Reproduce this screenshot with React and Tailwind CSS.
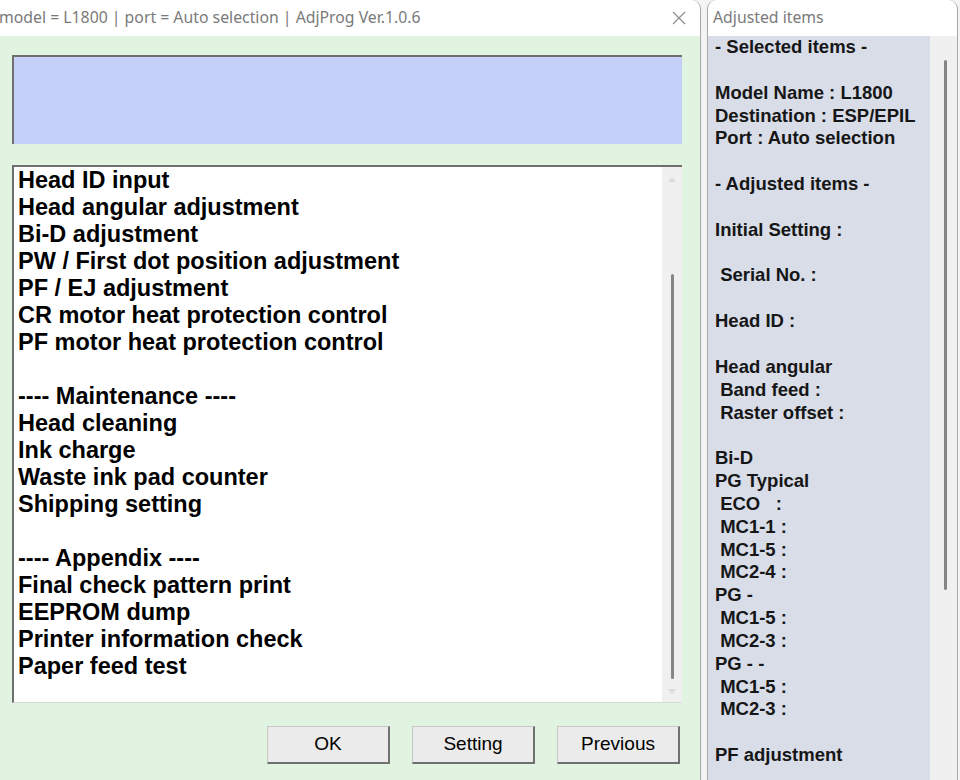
import React from 'react';

const menuItems = [
  'Head ID input',
  'Head angular adjustment',
  'Bi-D adjustment',
  'PW / First dot position adjustment',
  'PF / EJ adjustment',
  'CR motor heat protection control',
  'PF motor heat protection control',
  '',
  '---- Maintenance ----',
  'Head cleaning',
  'Ink charge',
  'Waste ink pad counter',
  'Shipping setting',
  '',
  '---- Appendix ----',
  'Final check pattern print',
  'EEPROM dump',
  'Printer information check',
  'Paper feed test',
];

const adjustedLines = [
  '- Selected items -',
  '',
  'Model Name : L1800',
  'Destination : ESP/EPIL',
  'Port : Auto selection',
  '',
  '- Adjusted items -',
  '',
  'Initial Setting :',
  '',
  ' Serial No. :',
  '',
  'Head ID :',
  '',
  'Head angular',
  ' Band feed :',
  ' Raster offset :',
  '',
  'Bi-D',
  'PG Typical',
  ' ECO   :',
  ' MC1-1 :',
  ' MC1-5 :',
  ' MC2-4 :',
  'PG -',
  ' MC1-5 :',
  ' MC2-3 :',
  'PG - -',
  ' MC1-5 :',
  ' MC2-3 :',
  '',
  'PF adjustment',
];

function WinButton({ children }) {
  return (
    <button className="w-[123px] h-[38px] bg-[#ebebeb] border-t border-l border-[#c8c8c8] border-r-2 border-b-2 border-r-[#707070] border-b-[#707070] text-[19px] text-black font-[family-name:Liberation_Sans,Arial,sans-serif] flex items-center justify-center">
      {children}
    </button>
  );
}

export default function App() {
  return (
    <div className="w-[960px] h-[780px] flex bg-[#f4f4f4] overflow-hidden font-[family-name:Liberation_Sans,Arial,sans-serif]">
      {/* main window */}
      <div className="w-[701px] h-full flex flex-col bg-white border-r border-[#a8a8a8] rounded-tr-[9px] overflow-hidden">
        <div className="h-[36px] shrink-0 flex items-center justify-between pr-[13px]">
          <span className="text-[15.8px] text-[#7a7a7a] font-[family-name:Noto_Sans,sans-serif] -ml-[1px] whitespace-nowrap">
            model = L1800 | port = Auto selection | AdjProg Ver.1.0.6
          </span>
          <svg width="16" height="16" viewBox="0 0 16 16" className="text-[#8a8a8a]">
            <path d="M2 2 L14 14 M14 2 L2 14" stroke="currentColor" strokeWidth="1.1" fill="none" />
          </svg>
        </div>
        <div className="flex-1 bg-[#e1f3e1] pl-[12px] pr-[18px] pt-[19px] flex flex-col">
          <div className="h-[89px] bg-[#c4d0f8] border-t-2 border-l-2 border-[#6f6f6f]" />
          <div className="mt-[21px] h-[538px] bg-white border-t-2 border-l-2 border-[#6f6f6f] border-b border-b-[#d8d8d8] flex">
            <div className="flex-1 pl-[4px]">
              {menuItems.map((item, i) => (
                <div key={i} className="h-[27px] leading-[27px] text-[23.5px] font-bold text-black whitespace-pre">
                  {item}
                </div>
              ))}
            </div>
            <div className="w-[20px] bg-[#f0f0f0] flex flex-col items-center pt-[10px] pb-[8px]">
              <svg width="8" height="5" viewBox="0 0 8 5"><path d="M0 5 L4 0 L8 5 Z" fill="#dcdcdc" /></svg>
              <div className="mt-[92px] w-[3px] h-[405px] bg-[#858585] rounded-full" />
              <div className="flex-1" />
              <svg width="8" height="5" viewBox="0 0 8 5"><path d="M0 0 L4 5 L8 0 Z" fill="#dcdcdc" /></svg>
            </div>
          </div>
          <div className="mt-[23px] flex justify-end gap-[22px] mr-[2px]">
            <WinButton>OK</WinButton>
            <WinButton>Setting</WinButton>
            <WinButton>Previous</WinButton>
          </div>
        </div>
      </div>

      <div className="w-[6px] shrink-0" />

      {/* adjusted items window */}
      <div className="w-[251px] h-full flex flex-col bg-white border-l border-r border-[#a8a8a8] rounded-t-[9px] overflow-hidden">
        <div className="h-[36px] shrink-0 flex items-center pl-[5px]">
          <span className="text-[15.8px] text-[#7a7a7a] font-[family-name:Noto_Sans,sans-serif]">Adjusted items</span>
        </div>
        <div className="flex-1 flex">
          <div className="w-[222px] bg-[#d8dde8] pl-[7px]">
            {adjustedLines.map((line, i) => (
              <div key={i} className="h-[22.85px] leading-[22.85px] text-[18.5px] font-bold text-[#161616] whitespace-pre">
                {line}
              </div>
            ))}
          </div>
          <div className="flex-1 bg-[#f0f0f0] flex justify-center pt-[24px]">
            <div className="w-[3px] h-[530px] bg-[#858585] rounded-full ml-[4px]" />
          </div>
        </div>
      </div>
    </div>
  );
}
